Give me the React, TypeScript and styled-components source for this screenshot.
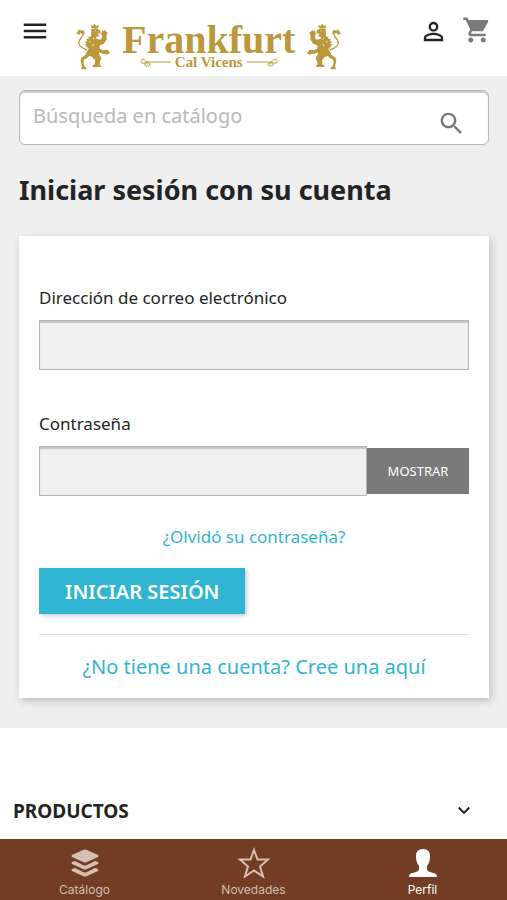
import React, { useState } from "react";
import styled, { createGlobalStyle } from "styled-components";

const GlobalStyle = createGlobalStyle`
  *, *::before, *::after { box-sizing: border-box; }
  body { margin: 0; background: #fff; color: #232323; font-family: "Noto Sans", sans-serif; }
  button, input { font-family: inherit; border-radius: 0; }
  a { text-decoration: none; }
`;

const Page = styled.div`
  min-height: 100vh;
  display: flex;
  flex-direction: column;
`;

const Header = styled.header`
  height: 76px;
  padding: 0 15px 0 20px;
  display: flex;
  align-items: flex-start;
  background: #fff;
`;

const IconButton = styled.button<{ $color?: string; $top?: number }>`
  border: 0;
  padding: 0;
  margin-top: ${(p) => p.$top ?? 16}px;
  background: none;
  color: ${(p) => p.$color ?? "#232323"};
  display: flex;
  cursor: pointer;
`;

const Actions = styled.div`
  margin-left: auto;
  display: flex;
  gap: 14px;
`;

const Logo = styled.a`
  margin: 20px 0 0 22px;
  display: flex;
  align-items: flex-start;
  gap: 8px;
  color: #bd973c;
`;

const Wordmark = styled.span`
  display: flex;
  flex-direction: column;
  align-items: center;
  padding-top: 3px;
  font-family: "Liberation Serif", serif;
  font-weight: 700;
`;

const BrandName = styled.span`
  font-size: 40px;
  line-height: 33px;
`;

const BrandLine = styled.span`
  display: flex;
  align-items: center;
  gap: 4px;
  font-size: 15px;
  line-height: 12px;
`;

const Main = styled.main`
  background: #efefef;
  padding: 14px 18px 30px 19px;
`;

const Search = styled.form`
  height: 55px;
  display: flex;
  align-items: center;
  background: #fff;
  border: 1px solid #b9b9b9;
  border-radius: 6px;
  box-shadow: inset 0 2px 1px #c9c9c9;
  padding: 0 22px 0 13px;
`;

const SearchInput = styled.input`
  flex: 1;
  min-width: 0;
  border: 0;
  outline: 0;
  padding: 0 0 4px;
  background: none;
  font-size: 20px;
  &::placeholder { color: #b9b9b9; opacity: 1; }
`;

const Title = styled.h1`
  margin: 26px 0 27px;
  font-size: 27px;
  line-height: 38px;
  font-weight: 700;
`;

const Card = styled.form`
  background: #fff;
  padding: 48px 20px 16px;
  box-shadow: 2px 3px 8px rgba(0, 0, 0, 0.2);
`;

const Field = styled.div`
  margin-bottom: 40px;
`;

const Label = styled.label`
  display: block;
  margin-bottom: 8px;
  font-size: 17px;
  line-height: 28px;
`;

const InputRow = styled.div`
  display: flex;
  align-items: center;
`;

const TextInput = styled.input`
  flex: 1;
  min-width: 0;
  height: 50px;
  padding: 0 14px;
  background: #f0f0f0;
  border: 1px solid #b5b5b5;
  box-shadow: inset 0 2px 1px #c6c6c6;
  font-size: 18px;
`;

const ShowButton = styled.button`
  width: 102px;
  height: 46px;
  border: 0;
  padding: 0 0 1px;
  background: #7a7a7a;
  color: #fff;
  font-size: 13px;
`;

const Forgot = styled.a`
  display: block;
  margin-top: -13px;
  text-align: center;
  color: #2fb5d2;
  font-size: 17px;
  line-height: 28px;
`;

const Submit = styled.button`
  display: block;
  height: 46px;
  margin-top: 17px;
  padding: 0 26px;
  border: 0;
  background: #2fb5d2;
  color: #fff;
  font-size: 20px;
  font-weight: 600;
  box-shadow: 2px 2px 4px rgba(0, 0, 0, 0.2);
`;

const Register = styled.a`
  display: block;
  margin-top: 20px;
  padding-top: 17px;
  border-top: 1px solid #e3e3e3;
  text-align: center;
  color: #2fb5d2;
  font-size: 20px;
  line-height: 30px;
`;

const FooterSection = styled.button`
  display: flex;
  align-items: center;
  justify-content: space-between;
  margin-top: 68px;
  padding: 0 31px 0 13px;
  height: 30px;
  border: 0;
  background: none;
  color: #232323;
  font-size: 19px;
  font-weight: 700;
`;

const TabBar = styled.nav`
  margin-top: auto;
  height: 61px;
  display: grid;
  grid-template-columns: repeat(3, 1fr);
  background: #723d24;
`;

const Tab = styled.a<{ $active?: boolean }>`
  display: flex;
  flex-direction: column;
  align-items: center;
  padding-top: 8px;
  gap: 3px;
  color: ${(p) => (p.$active ? "#fff" : "#d5bfb2")};
  font-family: Inter, sans-serif;
  font-size: 12px;
  line-height: 16px;
`;

const Lion = ({ flip = false }: { flip?: boolean }) => (
  <svg width="42" height="50" viewBox="0 0 126 150" fill="currentColor" aria-hidden="true">
    <g transform={flip ? "matrix(-1 0 0 1 126 0)" : undefined}>
      <path d="M59 24l-3-9 7 3 5-7 5 7 8-3-3 9z" />
      <path d="M58 26l14-1 10 4 5 7-3 4-8 1 5 5-4 4-5 1 1 5 12 3 6-8-2-7-4-5 5-1 0-8 5 4 4-5 3 6 5 2-2 6-2 4 1 11-8 13-11 4-3 6 2 5 9 5 8-2 6 1 5 6 2 6-6-1-2 5-5-5-10 0-10-4 0 5 7 12-3 9-3 10 6 4-3 4H63l-2-4 7-4 1-13-9-10-9-2-5 6-9 4-3 9 3 12 7 5-2 4H28l0-5 2-4-4-16 2-10 12-8 5-10 6-11-6 3 2-6-7 1 4-6-7-1 7-5-6-4 8-3-4-6 9-1-2-6 8 0z" />
      <path d="M45 90Q22 82 20 69c-1-12 15-18 13-27-1-6-9-9-15-1" fill="none" stroke="currentColor" strokeWidth="4" />
      <path d="M12 42l7-11 6-3-2 4 10-2 5 6-1 8-5-6-8 2-3 6-3-4z" />
      <path d="M68 31l7 1-4 3zM63 51l5 8-5-2zM59 76l9-5-3 8zM54 61l4 7-6-1z" fill="#fff" opacity=".7" />
    </g>
  </svg>
);

const Flourish = ({ flip = false }: { flip?: boolean }) => (
  <svg width="31" height="12" viewBox="0 0 31 12" fill="none" stroke="currentColor" aria-hidden="true">
    <g transform={flip ? "matrix(-1 0 0 1 31 0)" : undefined}>
      <path d="M31 6H8C5 6 5 3 3 3S0 6 2 7s3-1 5 0-1 5-2 2 2-3 4-2 1 3-1 3" />
    </g>
  </svg>
);

const MaterialIcon = ({ size, d }: { size: number; d: string }) => (
  <svg width={size} height={size} viewBox="0 0 24 24" fill="currentColor" aria-hidden="true">
    <path d={d} />
  </svg>
);

const MENU = "M3 18h18v-2H3v2zm0-5h18v-2H3v2zm0-7v2h18V6H3z";
const PERSON =
  "M12 5.9a2.1 2.1 0 1 1 0 4.2 2.1 2.1 0 0 1 0-4.2m0 9c2.97 0 6.1 1.46 6.1 2.1v1.1H5.9V17c0-.64 3.13-2.1 6.1-2.1M12 4C9.79 4 8 5.79 8 8s1.79 4 4 4 4-1.79 4-4-1.79-4-4-4zm0 9c-2.67 0-8 1.34-8 4v3h16v-3c0-2.66-5.33-4-8-4z";
const CART =
  "M7 18c-1.1 0-1.99.9-1.99 2S5.9 22 7 22s2-.9 2-2-.9-2-2-2zM1 2v2h2l3.6 7.59-1.35 2.45c-.16.28-.25.61-.25.96 0 1.1.9 2 2 2h12v-2H7.42c-.14 0-.25-.11-.25-.25l.03-.12.9-1.63h7.45c.75 0 1.41-.41 1.75-1.03l3.58-6.49c.08-.14.12-.31.12-.48 0-.55-.45-1-1-1H5.21l-.94-2H1zm16 16c-1.1 0-1.99.9-1.99 2s.89 2 1.99 2 2-.9 2-2-.9-2-2-2z";
const SEARCH =
  "M15.5 14h-.79l-.28-.27C15.41 12.59 16 11.11 16 9.5 16 5.91 13.09 3 9.5 3S3 5.91 3 9.5 5.91 16 9.5 16c1.61 0 3.09-.59 4.23-1.57l.27.28v.79l5 4.99L20.49 19l-4.99-5zm-6 0C7.01 14 5 11.99 5 9.5S7.01 5 9.5 5 14 7.01 14 9.5 11.99 14 9.5 14z";
const CHEVRON = "M7.41 7.84L12 12.42l4.59-4.58L18 9.25l-6 6-6-6z";

export default function App() {
  const [visible, setVisible] = useState(false);
  return (
    <Page>
      <GlobalStyle />
      <Header>
        <IconButton type="button" aria-label="Menú">
          <MaterialIcon size={30} d={MENU} />
        </IconButton>
        <Logo href="#" aria-label="Frankfurt Cal Vicens">
          <Lion />
          <Wordmark>
            <BrandName>Frankfurt</BrandName>
            <BrandLine>
              <Flourish />
              Cal Vicens
              <Flourish flip />
            </BrandLine>
          </Wordmark>
          <Lion flip />
        </Logo>
        <Actions>
          <IconButton type="button" aria-label="Mi cuenta" $top={17}>
            <MaterialIcon size={29} d={PERSON} />
          </IconButton>
          <IconButton type="button" aria-label="Carrito" $color="#7a7a7a" $top={15}>
            <MaterialIcon size={30} d={CART} />
          </IconButton>
        </Actions>
      </Header>
      <Main>
        <Search role="search">
          <SearchInput type="text" aria-label="Búsqueda en catálogo" placeholder="Búsqueda en catálogo" />
          <IconButton type="button" aria-label="Buscar" $color="#7a7a7a" $top={12}>
            <MaterialIcon size={29} d={SEARCH} />
          </IconButton>
        </Search>
        <Title>Iniciar sesión con su cuenta</Title>
        <Card>
          <Field>
            <Label htmlFor="email">Dirección de correo electrónico</Label>
            <InputRow>
              <TextInput id="email" type="email" />
            </InputRow>
          </Field>
          <Field>
            <Label htmlFor="password">Contraseña</Label>
            <InputRow>
              <TextInput id="password" type={visible ? "text" : "password"} />
              <ShowButton type="button" onClick={() => setVisible(!visible)}>
                MOSTRAR
              </ShowButton>
            </InputRow>
          </Field>
          <Forgot href="#">¿Olvidó su contraseña?</Forgot>
          <Submit type="button">INICIAR SESIÓN</Submit>
          <Register href="#">¿No tiene una cuenta? Cree una aquí</Register>
        </Card>
      </Main>
      <FooterSection type="button">
        PRODUCTOS
        <MaterialIcon size={24} d={CHEVRON} />
      </FooterSection>
      <TabBar>
        <Tab href="#">
          <svg width="32" height="32" viewBox="0 0 32 32" fill="currentColor" aria-hidden="true">
            <path d="M14 3q2-1 4 0l11 5q1 1 0 2l-11 5q-2 1-4 0L3 10q-1-1 0-2z" />
            <path d="M3 15l3-1 8 4q2 1 4 0l8-4 3 1q1 1 0 2l-11 5q-2 1-4 0L3 17q-1-1 0-2z" />
            <path d="M3 22l3-1 8 4q2 1 4 0l8-4 3 1q1 1 0 2l-11 5q-2 1-4 0L3 24q-1-1 0-2z" />
          </svg>
          Catálogo
        </Tab>
        <Tab href="#">
          <svg width="34" height="32" viewBox="0 0 34 32" fill="none" stroke="currentColor" strokeWidth="2" aria-hidden="true">
            <path d="M17 3l3.500 9.500H31l-8 7 3 10-9-6-9 6 3-10-8-7h10.500z" />
          </svg>
          Novedades
        </Tab>
        <Tab href="#" $active>
          <svg width="30" height="32" viewBox="0 0 30 32" fill="currentColor" aria-hidden="true">
            <path d="M15 2c5 0 7 3 7 7 0 5-1 7-3 10v3c0 2 3 3 6 4 3 0 4 2 4 4H1c0-2 1-4 4-4 3-1 6-2 6-4v-3C9 16 8 14 8 9c0-4 2-7 7-7z" />
          </svg>
          Perfil
        </Tab>
      </TabBar>
    </Page>
  );
}
